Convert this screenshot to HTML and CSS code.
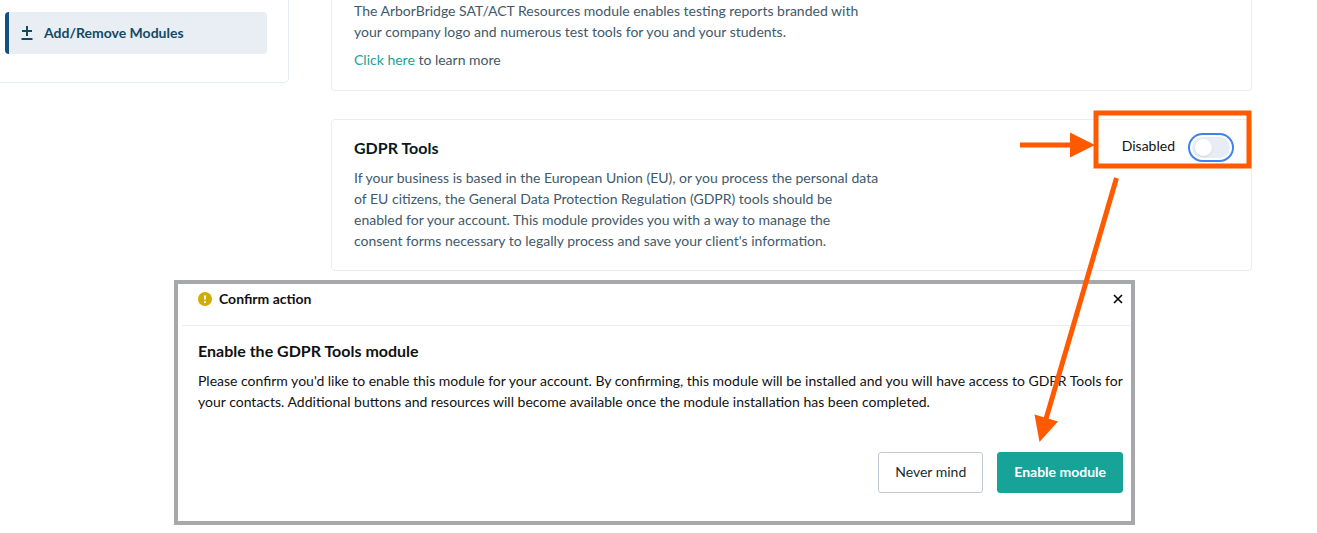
FILE: index.html
```html
<!DOCTYPE html>
<html lang="en">
<head>
    <meta charset="UTF-8">
    <meta name="viewport" content="width=device-width, initial-scale=1.0">
    <title>Add/Remove Modules</title>
    <link rel="stylesheet" href="styles.css">
</head>
<body>
    <div class="page">
        <div class="columns">
            <nav class="sidebar">
                <a class="nav-item" href="#modules">
                    <svg class="nav-icon" viewBox="0 0 12 16" aria-hidden="true">
                        <path d="M6 2v10M1 7h10M.5 15h11"/>
                    </svg>
                    <span>Add/Remove Modules</span>
                </a>
            </nav>
            <main class="modules" id="modules">
                <section class="card card-cut">
                    <div class="card-text">
                        <p>The ArborBridge SAT/ACT Resources module enables testing reports branded with your company logo and numerous test tools for you and your students.</p>
                        <p><a href="#learn">Click here</a> to learn more</p>
                    </div>
                </section>
                <section class="card">
                    <div class="card-text">
                        <h2>GDPR Tools</h2>
                        <p>If your business is based in the European Union (EU), or you process the personal data of EU citizens, the General Data Protection Regulation (GDPR) tools should be enabled for your account. This module provides you with a way to manage the consent forms necessary to legally process and save your client's information.</p>
                    </div>
                    <div class="switch">
                        <label for="gdpr">Disabled</label>
                        <input type="checkbox" id="gdpr" role="switch">
                    </div>
                </section>
            </main>
        </div>

        <div class="dialog" role="dialog" aria-labelledby="dialog-title">
            <div class="dialog-head">
                <svg class="warn-icon" viewBox="0 0 14 14" aria-hidden="true">
                    <circle cx="7" cy="7" r="7"/>
                    <path d="M7 3.4v4.2M7 9.3v1.6"/>
                </svg>
                <span id="dialog-title">Confirm action</span>
                <button class="close" type="button" aria-label="Close">
                    <svg viewBox="0 0 10 10" aria-hidden="true">
                        <path d="M1 1l8 8M9 1l-8 8"/>
                    </svg>
                </button>
            </div>
            <div class="dialog-body">
                <h2>Enable the GDPR Tools module</h2>
                <p>Please confirm you'd like to enable this module for your account. By confirming, this module will be installed and you will have access to GDPR Tools for your contacts. Additional buttons and resources will become available once the module installation has been completed.</p>
            </div>
            <div class="dialog-foot">
                <button class="btn" type="button">Never mind</button>
                <button class="btn btn-primary" type="button">Enable module</button>
            </div>
        </div>

        <!-- arrows and highlight box over the toggle -->
        <svg class="notes" viewBox="0 0 240 340" aria-hidden="true">
            <rect x="84" y="8" width="153" height="53"/>
            <path d="M8 40h52M104.500 73L34 314"/>
            <polygon points="58,27.500 83,40 58,52.500"/>
            <polygon points="22.500,309.500 46,316.500 27.500,337"/>
        </svg>
    </div>
</body>
</html>
```

FILE: styles.css
```css
* {
    box-sizing: border-box;
}
body {
    font-family: Lato, sans-serif;
    font-size: 14px;
    line-height: 21px;
    margin: 0;
    color: #111;
    background-color: #fff;
}
h2 {
    font-size: 16px;
    line-height: 24px;
    margin: 0 0 7px;
}
p {
    margin: 0 0 7px;
}
p:last-child {
    margin-bottom: 0;
}
button {
    font: inherit;
    cursor: pointer;
}
.page {
    position: relative;
}
.columns {
    display: flex;
    align-items: flex-start;
    gap: 42px;
    padding-right: 65px;
}
.sidebar {
    width: 289px;
    padding: 12px 21px 28px 5px;
    border: 1px solid #e8edf5;
    border-width: 0 1px 1px 0;
    border-bottom-right-radius: 5px;
}
.nav-item {
    display: flex;
    align-items: center;
    gap: 11px;
    height: 42px;
    padding: 0 0 2px 12px;
    border-left: 4px solid #12507f;
    border-radius: 4px;
    background-color: #e9eef5;
    color: #124a63;
    font-weight: bold;
    text-decoration: none;
}
.nav-icon {
    width: 12px;
    height: 16px;
    fill: none;
    stroke: #124a63;
    stroke-width: 2;
}
.modules {
    flex: 1;
    display: flex;
    flex-direction: column;
    gap: 28px;
}
.card {
    display: flex;
    justify-content: space-between;
    align-items: flex-start;
    padding: 16px 17px 19px 22px;
    border: 1px solid #ebedf4;
    border-radius: 4px;
}
.card-cut {
    padding-top: 0;
    padding-bottom: 20px;
    border-top: none;
    border-radius: 0 0 4px 4px;
}
.card-text {
    max-width: 526px;
    color: #41596a;
}
.card-text h2 {
    color: #06191e;
}
.card-text a {
    color: #17a398;
    text-decoration: none;
}
.switch {
    display: flex;
    align-items: flex-start;
    gap: 17px;
    padding: 1px 4px 0 0;
}
.switch label {
    line-height: 18px;
}
.switch input {
    appearance: none;
    width: 38px;
    height: 21px;
    margin: 0;
    padding: 2px 3px;
    border-radius: 11px;
    background-color: #e8edf5;
    outline: 2px solid #3f82f0;
    outline-offset: 2px;
}
.switch input::before {
    content: "";
    display: block;
    width: 17px;
    height: 17px;
    border-radius: 50%;
    background-color: #fff;
    box-shadow: 0 1px 2px rgba(0, 0, 0, 0.1);
}
.dialog {
    margin: 9px 182px 0 174px;
    padding-bottom: 28px;
    border: 4px solid #a6a8ac;
    background-color: #fff;
}
.dialog-head {
    display: flex;
    align-items: center;
    gap: 7px;
    margin-left: 4px;
    padding: 4px 8px 16px 16px;
    border-bottom: 1px solid #ebecee;
    font-weight: bold;
}
.warn-icon {
    width: 14px;
    height: 14px;
    fill: #d3ab05;
}
.warn-icon path {
    stroke: #fff;
    stroke-width: 2;
}
.close {
    display: flex;
    margin-left: auto;
    padding: 0;
    border: none;
    background: none;
}
.close svg {
    width: 10px;
    height: 10px;
    stroke: #000;
    stroke-width: 1.6;
}
.dialog-body {
    padding: 13px 8px 0 20px;
}
.dialog-foot {
    display: flex;
    justify-content: flex-end;
    gap: 14px;
    padding: 40px 8px 0 20px;
}
.btn {
    height: 41px;
    padding: 0 16px 2px;
    border: 1px solid #c0cad6;
    border-radius: 3px;
    background-color: #fff;
    color: #172b2f;
}
.btn-primary {
    border-color: #17a398;
    background-color: #17a398;
    color: #fff;
    font-weight: bold;
}
.notes {
    position: absolute;
    top: 105px;
    right: 65px;
    width: 240px;
    height: 340px;
    fill: #ff5a00;
    pointer-events: none;
}
.notes rect,
.notes path {
    fill: none;
    stroke: #ff5a00;
    stroke-width: 5;
}
```
